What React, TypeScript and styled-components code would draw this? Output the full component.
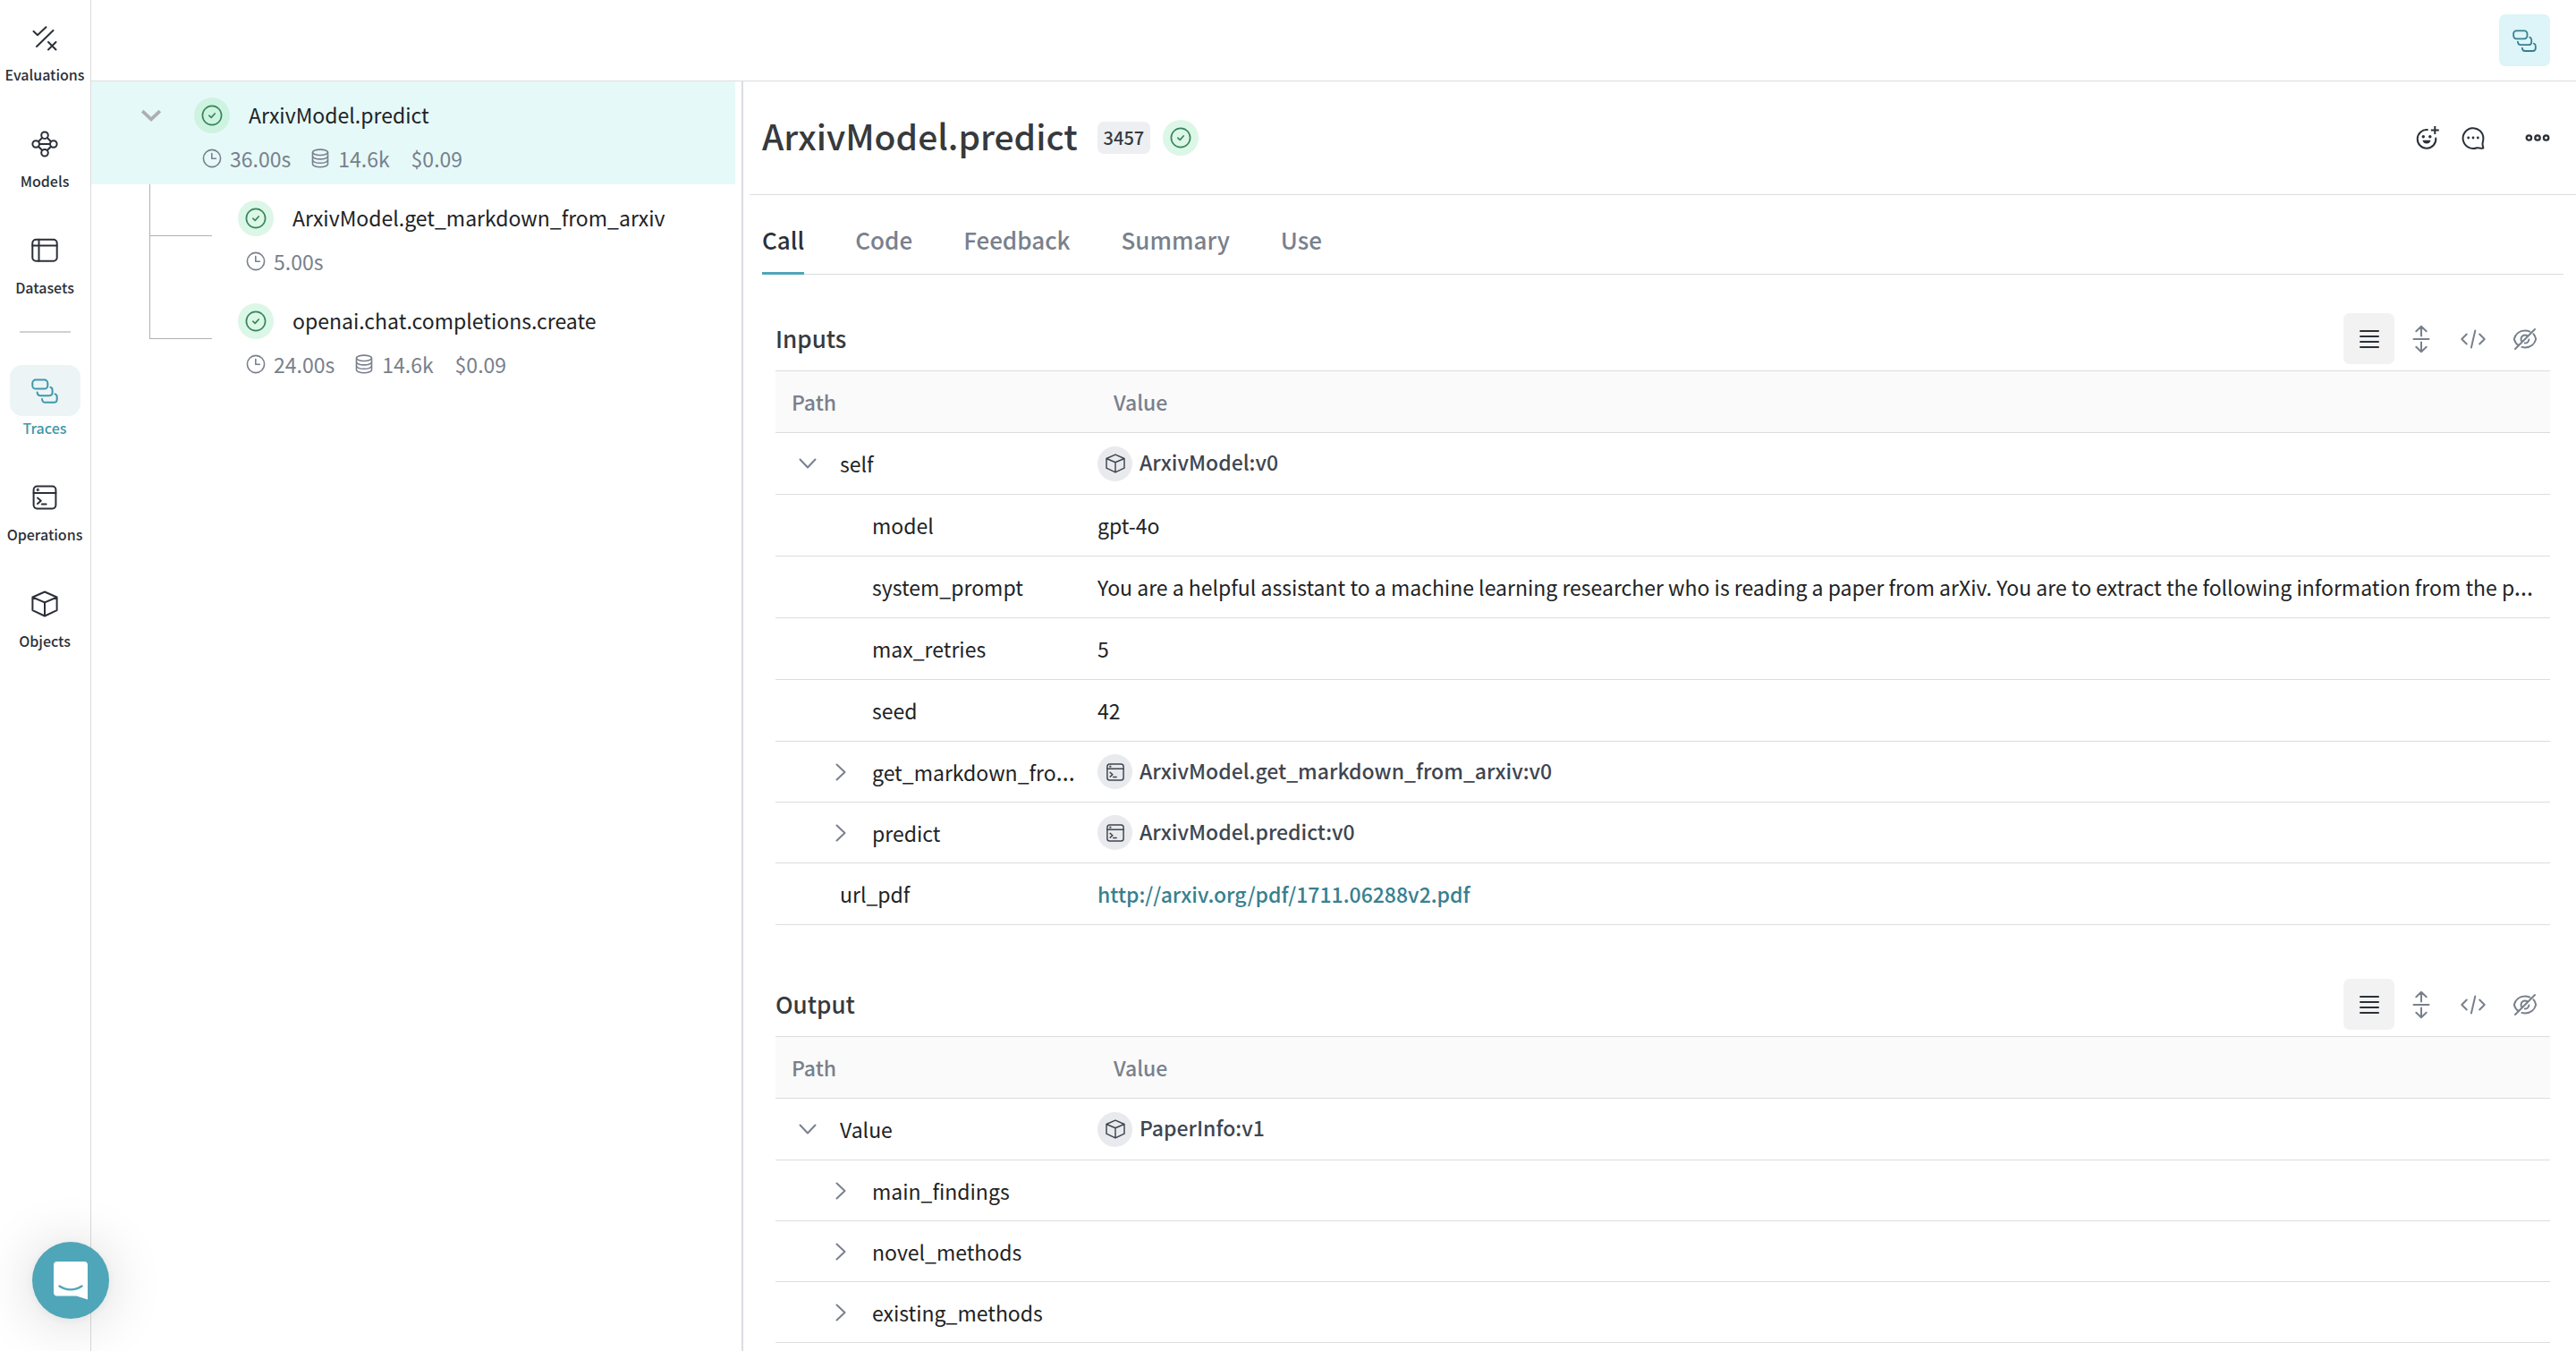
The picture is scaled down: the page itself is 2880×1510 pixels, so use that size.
import React from 'react';
import styled, { createGlobalStyle, css } from 'styled-components';

const SANS = "'Noto Sans CJK SC', 'Source Sans Pro', sans-serif";

const GlobalStyle = createGlobalStyle`
  *, *::before, *::after { box-sizing: border-box; }
  body {
    margin: 0;
    background: #fff;
    color: #212325;
    font-family: ${SANS};
    font-size: 23px;
    line-height: 36px;
    overflow: hidden;
  }
  button {
    margin: 0;
    padding: 0;
    border: 0;
    background: none;
    color: inherit;
    font: inherit;
    cursor: pointer;
  }
  a { color: inherit; text-decoration: none; }
  h1, h2, p { margin: 0; }
  svg { display: block; flex: none; }
`;

/* ---------- icons ---------- */

type IconProps = {
  size?: number;
  box?: number;
  weight?: number;
  children?: React.ReactNode;
};

const Glyph = ({ size = 30, box = 30, weight = 2, children }: IconProps) => (
  <svg
    width={size}
    height={size}
    viewBox={`0 0 ${box} ${box}`}
    fill="none"
    stroke="currentColor"
    strokeWidth={weight}
    strokeLinecap="round"
    strokeLinejoin="round"
    aria-hidden="true"
  >
    {children}
  </svg>
);

const EvaluationsIcon = () => (
  <Glyph>
    <path d="M2.5 8 7 12.3 16.5 3.3M24.5 7 6 25M19 20l8.5 8.5M27.5 20 19 28.5" />
  </Glyph>
);

const ModelsIcon = () => (
  <Glyph>
    <circle cx="15" cy="5.2" r="3.8" />
    <circle cx="5.2" cy="15" r="3.8" />
    <circle cx="24.8" cy="15" r="3.8" />
    <circle cx="15" cy="24.8" r="3.8" />
    <path d="M9 15h12M12.2 8 8 12.2M17.8 8l4.2 4.2M12.2 22 8 17.8M17.8 22l4.2-4.2" />
  </Glyph>
);

const DatasetsIcon = () => (
  <Glyph>
    <rect x="1.3" y="2.8" width="27.4" height="24" rx="4" />
    <path d="M1.3 9.5h27.4M8.5 2.8v24" />
  </Glyph>
);

const TracesIcon = ({ size = 30 }: { size?: number }) => (
  <Glyph size={size}>
    <rect x="1.3" y="2.6" width="17" height="10" rx="3.6" />
    <path d="M6.6 16.4c.2 2.6 1.5 3.8 3.7 3.8h9.7c2.4 0 3.6-1.3 3.6-3.6v-2.4c0-1.7-.7-2.9-2.2-3.4" />
    <path d="M12 24c.2 2.6 1.5 3.8 3.7 3.8h9.4c2.4 0 3.6-1.3 3.6-3.6v-2.4c0-1.7-.7-2.9-2.2-3.4" />
  </Glyph>
);

const OperationsIcon = ({ size = 30 }: { size?: number }) => (
  <Glyph size={size}>
    <rect x="2.6" y="2.6" width="24.8" height="24.8" rx="3.8" />
    <path d="M2.6 10h24.8M7 15.5l3.8 3.2L7 22M11.8 22.5h4.8" />
    <circle cx="7.3" cy="6.4" r=".6" />
  </Glyph>
);

const ObjectsIcon = ({ size = 30 }: { size?: number }) => (
  <Glyph size={size}>
    <path d="M15 1.5 28.6 7.5v14.6L15 28.5 1.4 22.1V7.5ZM1.4 7.5 15 13.3 28.6 7.5M15 13.3v15.2" />
  </Glyph>
);

const CheckCircleIcon = () => (
  <Glyph size={24} box={24} weight={1.7}>
    <circle cx="12" cy="12" r="10.6" />
    <path d="m8.8 12.2 2.4 2.2 4-4.4" />
  </Glyph>
);

const ClockIcon = () => (
  <Glyph size={22} box={22} weight={1.6}>
    <circle cx="11" cy="11" r="9.6" />
    <path d="M10.8 5.5v5.8h4.6" />
  </Glyph>
);

const CoinsIcon = () => (
  <Glyph size={22} box={22} weight={1.6}>
    <ellipse cx="11" cy="4.3" rx="8.5" ry="3.2" />
    <path d="M2.5 4.3v13.2c0 1.8 3.8 3.2 8.5 3.2s8.5-1.4 8.5-3.2V4.3" />
    <path d="M2.5 8.7c0 1.8 3.8 3.2 8.5 3.2s8.5-1.4 8.5-3.2M2.5 13.1c0 1.8 3.8 3.2 8.5 3.2s8.5-1.4 8.5-3.2" />
  </Glyph>
);

const TreeChevron = () => (
  <Glyph size={24} box={22} weight={3.4}>
    <path d="m2 6.5 9 8.5 9-8.5" strokeLinecap="butt" strokeLinejoin="miter" />
  </Glyph>
);

const ChevronDown = () => (
  <Glyph size={22} box={22} weight={2}>
    <path d="m2.5 6.5 8.5 9 8.5-9" />
  </Glyph>
);

const ChevronRight = () => (
  <Glyph size={22} box={22} weight={2}>
    <path d="m7.5 2.5 9 8.5-9 8.5" />
  </Glyph>
);

const AddReactionIcon = () => (
  <Glyph size={30}>
    <path d="M14.8 6.1A10.3 10.3 0 1 0 24.3 15.5" />
    <path d="M23.3 2v9M18.8 6.5h9" strokeLinecap="butt" />
    <circle cx="10.3" cy="13.8" r="1.7" fill="currentColor" stroke="none" />
    <circle cx="17.8" cy="13.8" r="1.7" fill="currentColor" stroke="none" />
    <path d="M9.5 17.8h9c-.6 2.6-2.3 3.8-4.5 3.8s-3.9-1.2-4.5-3.8Z" fill="currentColor" stroke="none" />
  </Glyph>
);

const CommentIcon = () => (
  <Glyph size={30}>
    <path d="M26.3 26.6c-2.9.2-5.2-.5-7.3-.3A11.4 11.4 0 1 1 26.400 15.5c0 2.700-.9 4.800-.9 6.600 0 1.500.8 2.900.8 4.500Z" />
    <g fill="currentColor" stroke="none">
      <circle cx="9.7" cy="15" r="1.4" />
      <circle cx="15" cy="15" r="1.4" />
      <circle cx="20.3" cy="15" r="1.4" />
    </g>
  </Glyph>
);

const MoreIcon = () => (
  <Glyph size={30} weight={2.3}>
    <circle cx="5.4" cy="15" r="2.7" />
    <circle cx="15" cy="15" r="2.7" />
    <circle cx="24.6" cy="15" r="2.7" />
  </Glyph>
);

const RowsIcon = () => (
  <Glyph>
    <path d="M5 6h20M5 12h20M5 18h20M5 24h20" />
  </Glyph>
);

const ExpandIcon = () => (
  <Glyph size={32} box={32}>
    <path d="M7.5 16h17M16 12.5V2M10.3 7.3 16 1.8l5.7 5.5M16 19.5V30M10.3 24.7l5.7 5.5 5.7-5.5" />
  </Glyph>
);

const CodeIcon = () => (
  <Glyph>
    <path d="M7.8 9.5 2.3 15l5.5 5.5M22.2 9.5l5.5 5.5-5.5 5.5M17.3 5.5l-4.4 19" />
  </Glyph>
);

const HiddenIcon = () => (
  <Glyph>
    <path d="M20.4 6.7A14.5 14.5 0 0 0 15 5.6C8.5 5.6 4.2 9.8 2.8 15c.8 3 2.5 5.5 5 7.2M24.4 9.2c1.4 1.6 2.3 3.6 2.8 5.8-1.4 5.2-5.7 9.4-12.2 9.4-1.3 0-2.5-.2-3.6-.5" />
    <path d="M17 11a4.5 4.5 0 0 0-6.5 4c0 1 .3 1.8.8 2.5M19.4 15.5a4.5 4.5 0 0 1-4.6 4M26 4 4 26" />
  </Glyph>
);

const MessengerIcon = () => (
  <svg width="40" height="44" viewBox="0 0 40 44" aria-hidden="true">
    <path d="M5 1h30a4 4 0 0 1 4 4v38.5L26.5 39.5H5a4 4 0 0 1-4-4V5a4 4 0 0 1 4-4Z" fill="#fff" />
    <path d="M7.5 28.5c7.5 5.2 17.5 5.2 25 0" fill="none" stroke="#4fa6b8" strokeWidth="2.4" strokeLinecap="round" />
  </svg>
);

/* ---------- page frame ---------- */

const Page = styled.div`
  display: flex;
  height: 100vh;
`;

const Sidebar = styled.nav`
  flex: none;
  display: flex;
  flex-direction: column;
  align-items: center;
  gap: 34px;
  width: 102px;
  padding: 13px 1px 0 0;
  border-right: 1px solid #dadbdc;
`;

const NavLink = styled.a<{ $active?: boolean }>`
  display: flex;
  flex-direction: column;
  align-items: center;
  padding-bottom: 2px;
  color: ${p => (p.$active ? '#3f98ab' : '#2b3038')};
  font-size: 16px;
  font-weight: 500;
  line-height: 26px;
`;

const NavIcon = styled.span<{ $active?: boolean }>`
  display: grid;
  place-items: center;
  width: 79px;
  height: 57px;
  border-radius: 14px;
  background: ${p => (p.$active ? '#ecf4f6' : 'transparent')};
`;

const NavDivider = styled.hr`
  width: 57px;
  height: 2px;
  margin: 0 0 2px;
  border: 0;
  background: #cfd0d2;
`;

const Workspace = styled.div`
  flex: 1;
  min-width: 0;
  display: flex;
  flex-direction: column;
`;

const TopBar = styled.header`
  flex: none;
  display: flex;
  justify-content: flex-end;
  padding: 16px 29px;
  border-bottom: 1px solid #dcdddf;
`;

const TraceToggle = styled.button`
  display: grid;
  place-items: center;
  width: 57px;
  height: 58px;
  border-radius: 7px;
  background: #ddf4f8;
  color: #38808f;
`;

const Panels = styled.div`
  flex: 1;
  min-height: 0;
  display: flex;
`;

/* ---------- trace tree ---------- */

const TreePanel = styled.aside`
  flex: none;
  width: 729px;
  padding-right: 7px;
  border-right: 2px solid #dadde2;
`;

const CallRow = styled.div<{ $selected?: boolean }>`
  display: flex;
  height: 115px;
  background: ${p => (p.$selected ? '#e6f9f9' : 'transparent')};
`;

const RootToggle = styled.button`
  align-self: flex-start;
  margin: 26px 36px 0 55px;
  color: #adafb4;
`;

const Connector = styled.span`
  display: flex;
  flex-direction: column;
  width: 70px;
  margin: 0 29px 0 65px;
`;

const Elbow = styled.span`
  height: 58px;
  border-left: 1px solid #aeb0b3;
  border-bottom: 1px solid #aeb0b3;
`;

const Rail = styled.span`
  flex: 1;
  border-left: 1px solid #aeb0b3;
`;

const CallBody = styled.div`
  display: flex;
  flex-direction: column;
  gap: 10px;
  padding-top: 18px;
`;

const CallLink = styled.a`
  display: flex;
  align-items: center;
  gap: 21px;
  white-space: nowrap;
`;

const CallName = styled.span`
  padding-bottom: 2px;
`;

const Status = styled.span<{ $deep?: boolean }>`
  flex: none;
  display: grid;
  place-items: center;
  width: 40px;
  height: 40px;
  border-radius: 50%;
  background: ${p => (p.$deep ? '#cef4e1' : '#dcf7e7')};
  color: #38875a;
`;

const Metrics = styled.div`
  display: flex;
  gap: 22px;
  padding-left: 9px;
  color: #79808c;
`;

const Metric = styled.span`
  display: flex;
  align-items: center;
  gap: 9px;
`;

const Cost = styled.span`
  padding-left: 2px;
`;

/* ---------- call detail ---------- */

const Detail = styled.main`
  flex: 1;
  min-width: 0;
  padding-left: 7px;
  overflow: hidden;
`;

const DetailHeader = styled.div`
  display: flex;
  align-items: center;
  height: 127px;
  padding: 0 28px 0 14px;
  border-bottom: 1px solid #dcdddf;
`;

const Title = styled.h1`
  padding-bottom: 6px;
  color: #363a3d;
  font-size: 39px;
  font-weight: 500;
  line-height: 56px;
`;

const CallId = styled.span`
  margin: 0 14px 0 22px;
  padding: 0 7px;
  border-radius: 7px;
  background: #eeeff3;
  color: #363a3d;
  font-size: 20px;
  font-weight: 500;
  line-height: 36px;
`;

const HeaderActions = styled.div`
  display: flex;
  align-items: center;
  gap: 21px;
  margin-left: auto;
  color: #2b3038;
`;

const MenuButton = styled.button`
  margin-left: 21px;
`;

const Tabs = styled.div`
  display: flex;
  gap: 57px;
  height: 89px;
  margin: 0 14px;
  border-bottom: 1px solid #d9dce1;
`;

const Tab = styled.button<{ $active?: boolean }>`
  height: 89px;
  padding-top: 14px;
  border-bottom: 3px solid transparent;
  color: #79808c;
  font-size: 26px;
  font-weight: 500;
  ${p =>
    p.$active &&
    css`
      border-color: #4fa6b8;
      color: #2b3038;
    `}
`;

const Section = styled.section`
  padding: 43px 29px 17px;
`;

const SectionHead = styled.div`
  display: flex;
  align-items: center;
  justify-content: space-between;
  margin-bottom: 7px;
`;

const SectionTitle = styled.h2`
  padding-bottom: 2px;
  color: #363a3d;
  font-size: 26px;
  font-weight: 500;
`;

const ViewModes = styled.div`
  display: flex;
  gap: 1px;
`;

const ViewMode = styled.button<{ $active?: boolean }>`
  display: grid;
  place-items: center;
  width: 57px;
  height: 57px;
  border-radius: 7px;
  background: ${p => (p.$active ? '#f2f2f2' : 'transparent')};
  color: ${p => (p.$active ? '#2b3038' : '#79808c')};
`;

const DataTable = styled.table`
  width: 100%;
  border-spacing: 0;
  border-top: 1px solid #dcdddf;
  table-layout: fixed;
  text-align: left;
`;

const HeadCell = styled.th<{ $path?: boolean }>`
  width: ${p => (p.$path ? '360px' : 'auto')};
  height: 69px;
  padding: 0 18px;
  border-bottom: 1px solid #dcdddf;
  background: #fafafa;
  color: #79808c;
  font-weight: 500;
`;

const PathCell = styled.th<{ $depth: number; $compact?: boolean }>`
  height: ${p => (p.$compact ? 68 : 69)}px;
  padding: 0 18px 0 ${p => 18 + p.$depth * 36}px;
  border-bottom: 1px solid #dcdddf;
  font-weight: 400;
`;

const PathLine = styled.div`
  display: flex;
  align-items: center;
`;

const Disclosure = styled.button`
  display: grid;
  place-items: center;
  width: 36px;
  height: 36px;
  color: #79808c;
`;

const DisclosureGap = styled.span`
  width: 36px;
`;

/* The ellipsis is drawn in the box's own font: the CJK one would centre its dots on the line. */
const truncate = css`
  overflow: hidden;
  font-family: 'Noto Sans', sans-serif;
  font-size: 27px;
  text-overflow: ellipsis;
  white-space: nowrap;
`;

const PathName = styled.span`
  flex: 1;
  min-width: 0;
  margin-left: 18px;
  ${truncate}
`;

const ValueCell = styled.td`
  padding: 0 6px 0 0;
  border-bottom: 1px solid #dcdddf;
  ${truncate}
`;

const CellText = styled.span`
  font-family: ${SANS};
  font-size: 23px;
`;

const RefLink = styled.a`
  display: flex;
  align-items: center;
  gap: 8px;
  color: #3f4650;
  font-family: ${SANS};
  font-size: 23px;
  font-weight: 500;
`;

const RefIcon = styled.span`
  display: grid;
  place-items: center;
  width: 39px;
  height: 39px;
  border-radius: 50%;
  background: #e9eaee;
`;

const RefName = styled.span`
  padding-bottom: 4px;
`;

const UrlLink = styled.a`
  color: #38808f;
  font-family: ${SANS};
  font-size: 23px;
  font-weight: 500;
`;

const Messenger = styled.button`
  position: fixed;
  left: 36px;
  bottom: 36px;
  display: grid;
  place-items: center;
  width: 86px;
  height: 86px;
  border-radius: 50%;
  background: #4fa6b8;
  box-shadow: 0 2px 12px rgba(0, 0, 0, 0.06), 0 4px 64px rgba(0, 0, 0, 0.16);
`;

/* ---------- data ---------- */

type Item = {
  path: string;
  depth: number;
  open?: boolean;
  kind?: 'object' | 'op' | 'url';
  value?: string;
};

const PROMPT =
  'You are a helpful assistant to a machine learning researcher who is reading a paper from arXiv. You are to extract the following information from the paper:';

const INPUTS: Item[] = [
  { path: 'self', depth: 0, open: true, kind: 'object', value: 'ArxivModel:v0' },
  { path: 'model', depth: 1, value: 'gpt-4o' },
  { path: 'system_prompt', depth: 1, value: PROMPT },
  { path: 'max_retries', depth: 1, value: '5' },
  { path: 'seed', depth: 1, value: '42' },
  { path: 'get_markdown_from_arxiv', depth: 1, open: false, kind: 'op', value: 'ArxivModel.get_markdown_from_arxiv:v0' },
  { path: 'predict', depth: 1, open: false, kind: 'op', value: 'ArxivModel.predict:v0' },
  { path: 'url_pdf', depth: 0, kind: 'url', value: 'http://arxiv.org/pdf/1711.06288v2.pdf' },
];

const OUTPUT: Item[] = [
  { path: 'Value', depth: 0, open: true, kind: 'object', value: 'PaperInfo:v1' },
  { path: 'main_findings', depth: 1, open: false },
  { path: 'novel_methods', depth: 1, open: false },
  { path: 'existing_methods', depth: 1, open: false },
];

const TABS = ['Call', 'Code', 'Feedback', 'Summary', 'Use'];

/* ---------- parts ---------- */

const NavItem = ({ label, icon, active }: { label: string; icon: React.ReactNode; active?: boolean }) => (
  <NavLink href="#" $active={active} aria-current={active ? 'page' : undefined}>
    <NavIcon $active={active}>{icon}</NavIcon>
    {label}
  </NavLink>
);

type CallProps = { name: string; time: string; tokens?: string; cost?: string; root?: boolean; last?: boolean };

const Call = ({ name, time, tokens, cost, root, last }: CallProps) => (
  <CallRow $selected={root}>
    {root ? (
      <RootToggle aria-label="Collapse call">
        <TreeChevron />
      </RootToggle>
    ) : (
      <Connector>
        <Elbow />
        {!last && <Rail />}
      </Connector>
    )}
    <CallBody>
      <CallLink href="#">
        <Status $deep={root}>
          <CheckCircleIcon />
        </Status>
        <CallName>{name}</CallName>
      </CallLink>
      <Metrics>
        <Metric>
          <ClockIcon />
          {time}
        </Metric>
        {tokens && (
          <Metric>
            <CoinsIcon />
            {tokens}
          </Metric>
        )}
        {cost && <Cost>{cost}</Cost>}
      </Metrics>
    </CallBody>
  </CallRow>
);

const Value = ({ item }: { item: Item }) => {
  if (item.kind === 'object' || item.kind === 'op') {
    return (
      <RefLink href="#">
        <RefIcon>{item.kind === 'op' ? <OperationsIcon size={22} /> : <ObjectsIcon size={22} />}</RefIcon>
        <RefName>{item.value}</RefName>
      </RefLink>
    );
  }
  if (item.kind === 'url') return <UrlLink href="#">{item.value}</UrlLink>;
  return <CellText>{item.value}</CellText>;
};

const DataSection = ({ title, items }: { title: string; items: Item[] }) => (
  <Section>
    <SectionHead>
      <SectionTitle>{title}</SectionTitle>
      <ViewModes>
        <ViewMode $active aria-label="Collapsed rows"><RowsIcon /></ViewMode>
        <ViewMode aria-label="Expand rows"><ExpandIcon /></ViewMode>
        <ViewMode aria-label="View as code"><CodeIcon /></ViewMode>
        <ViewMode aria-label="Hide"><HiddenIcon /></ViewMode>
      </ViewModes>
    </SectionHead>
    <DataTable>
      <thead>
        <tr>
          <HeadCell scope="col" $path>Path</HeadCell>
          <HeadCell scope="col">Value</HeadCell>
        </tr>
      </thead>
      <tbody>
        {items.map(item => (
          <tr key={item.path}>
            <PathCell scope="row" $depth={item.depth} $compact={item.open === false}>
              <PathLine>
                {item.open === undefined ? (
                  <DisclosureGap />
                ) : (
                  <Disclosure aria-label={`Toggle ${item.path}`} aria-expanded={item.open}>
                    {item.open ? <ChevronDown /> : <ChevronRight />}
                  </Disclosure>
                )}
                <PathName>
                  <CellText>{item.path}</CellText>
                </PathName>
              </PathLine>
            </PathCell>
            <ValueCell>
              <Value item={item} />
            </ValueCell>
          </tr>
        ))}
      </tbody>
    </DataTable>
  </Section>
);

export default function App() {
  return (
    <>
      <GlobalStyle />
      <Page>
        <Sidebar>
          <NavItem label="Evaluations" icon={<EvaluationsIcon />} />
          <NavItem label="Models" icon={<ModelsIcon />} />
          <NavItem label="Datasets" icon={<DatasetsIcon />} />
          <NavDivider />
          <NavItem label="Traces" icon={<TracesIcon />} active />
          <NavItem label="Operations" icon={<OperationsIcon />} />
          <NavItem label="Objects" icon={<ObjectsIcon />} />
        </Sidebar>
        <Workspace>
          <TopBar>
            <TraceToggle aria-label="Toggle trace tree">
              <TracesIcon size={27} />
            </TraceToggle>
          </TopBar>
          <Panels>
            <TreePanel>
              <Call name="ArxivModel.predict" time="36.00s" tokens="14.6k" cost="$0.09" root />
              <Call name="ArxivModel.get_markdown_from_arxiv" time="5.00s" />
              <Call name="openai.chat.completions.create" time="24.00s" tokens="14.6k" cost="$0.09" last />
            </TreePanel>
            <Detail>
              <DetailHeader>
                <Title>ArxivModel.predict</Title>
                <CallId>3457</CallId>
                <Status>
                  <CheckCircleIcon />
                </Status>
                <HeaderActions>
                  <button aria-label="Add reaction"><AddReactionIcon /></button>
                  <button aria-label="Add comment"><CommentIcon /></button>
                  <MenuButton aria-label="More actions"><MoreIcon /></MenuButton>
                </HeaderActions>
              </DetailHeader>
              <Tabs role="tablist">
                {TABS.map((tab, i) => (
                  <Tab key={tab} role="tab" aria-selected={i === 0} $active={i === 0}>
                    {tab}
                  </Tab>
                ))}
              </Tabs>
              <DataSection title="Inputs" items={INPUTS} />
              <DataSection title="Output" items={OUTPUT} />
            </Detail>
          </Panels>
        </Workspace>
        <Messenger aria-label="Open messenger">
          <MessengerIcon />
        </Messenger>
      </Page>
    </>
  );
}
